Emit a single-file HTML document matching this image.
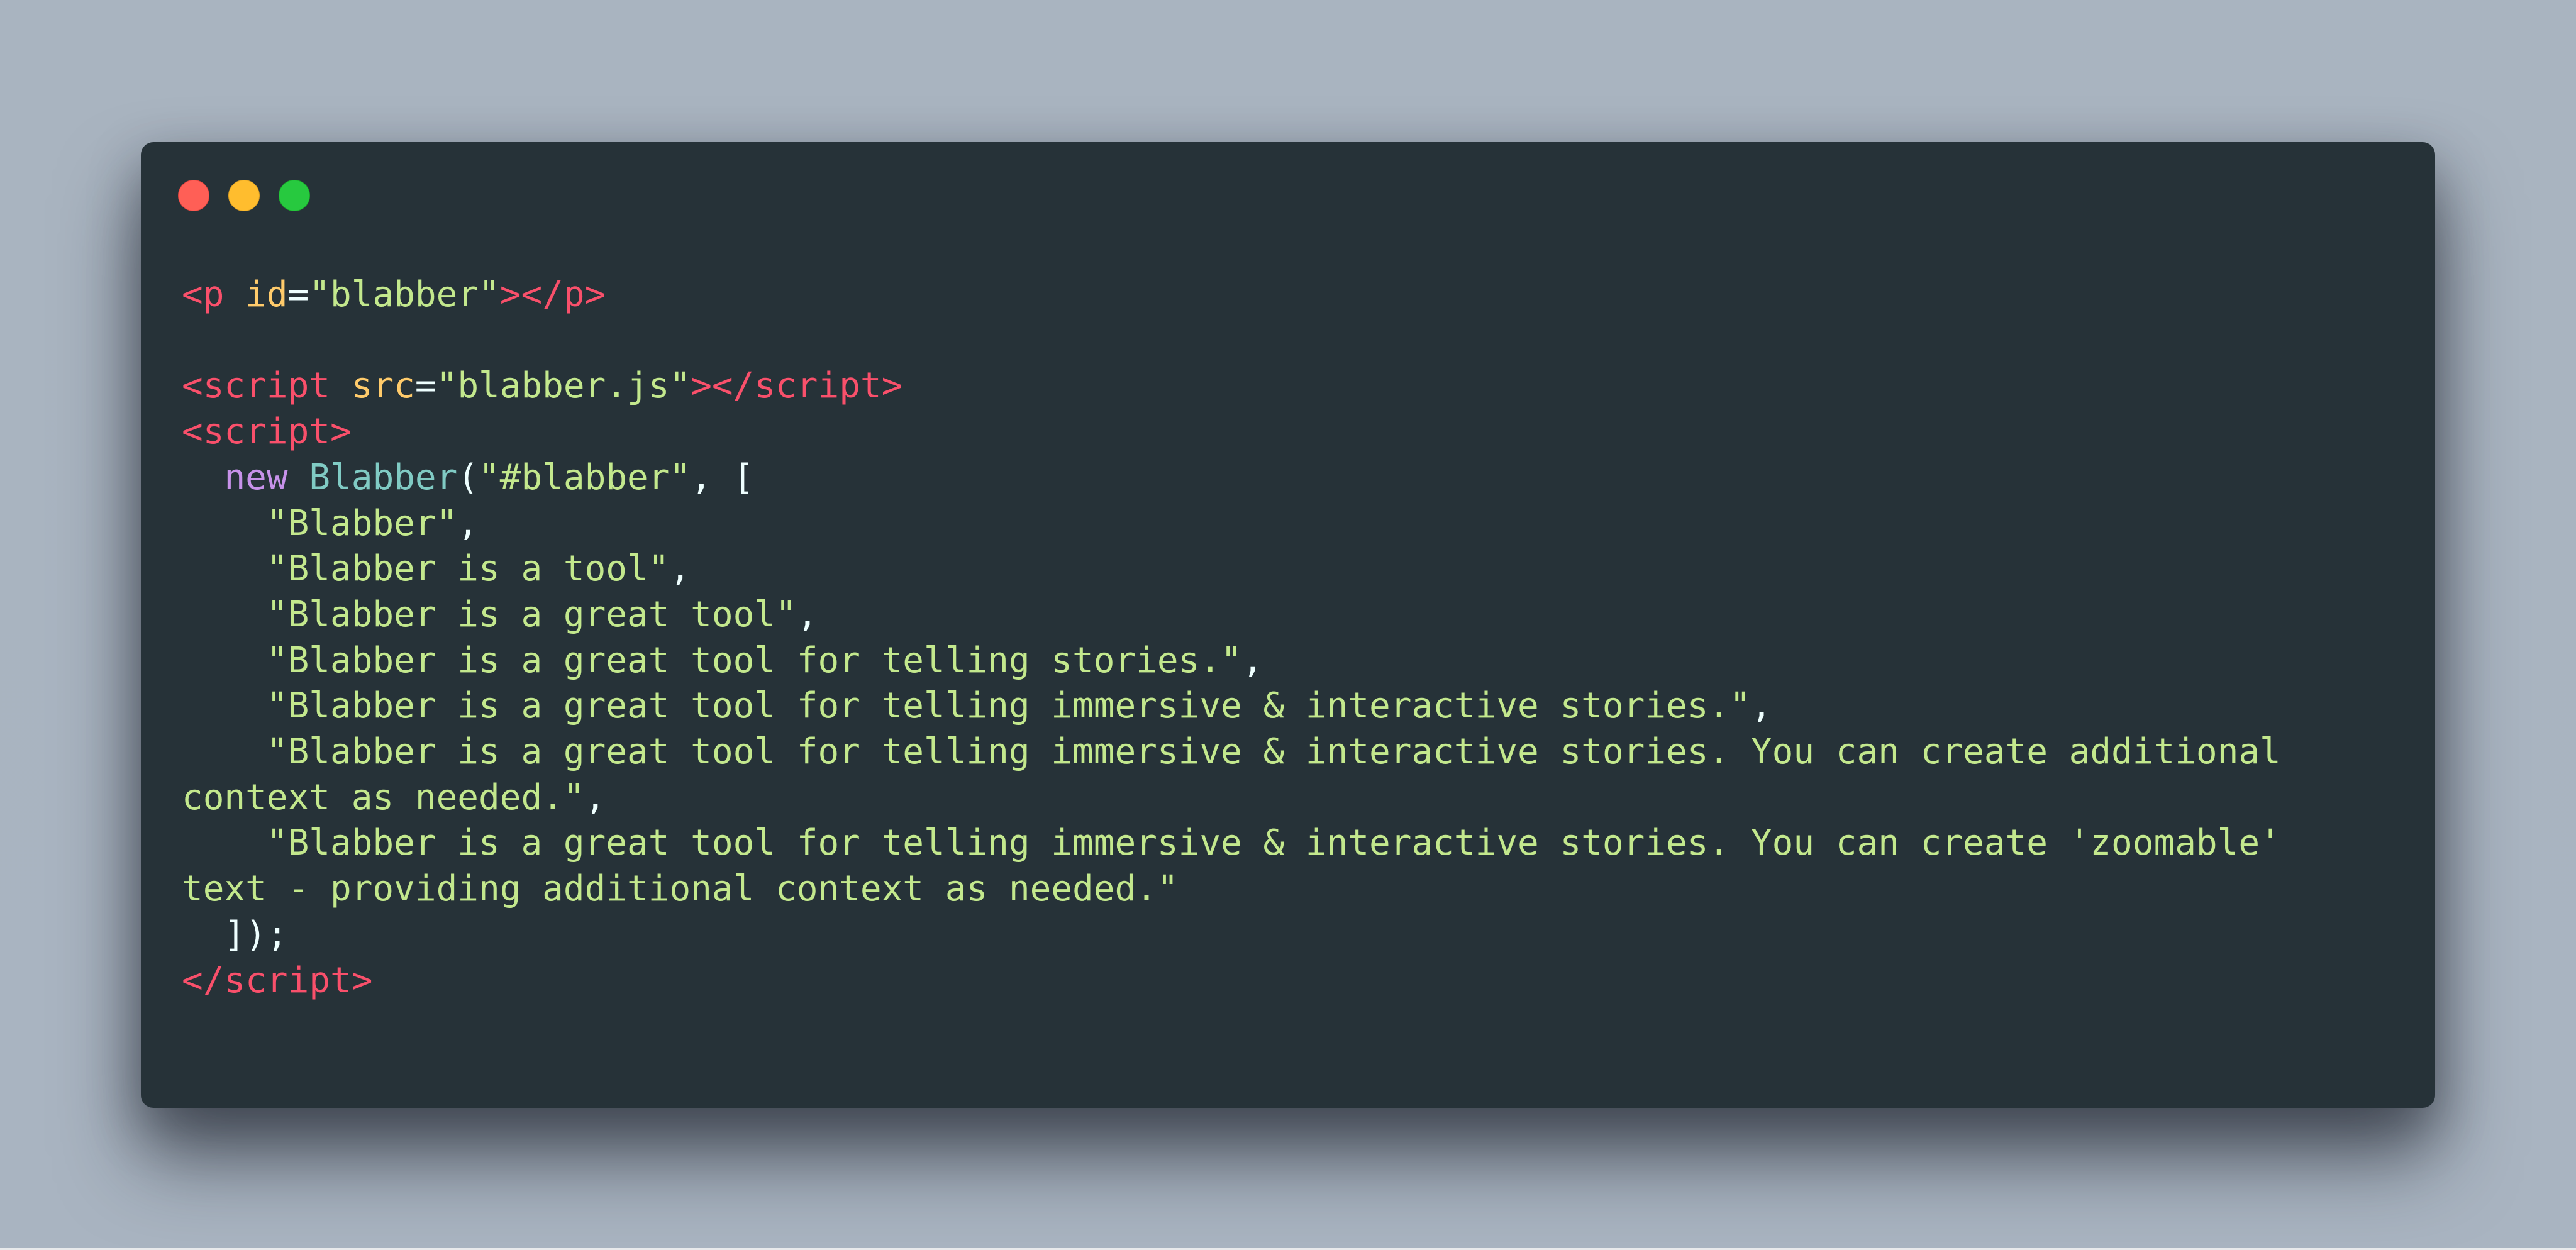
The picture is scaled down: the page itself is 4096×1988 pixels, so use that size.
<!DOCTYPE html>
<html><head><meta charset="utf-8"><style>
html,body{margin:0;padding:0}
body{width:4096px;height:1988px;overflow:hidden;background:linear-gradient(180deg,#a9b4c0 0%,#a9b4c1 100%);position:relative}
.win{position:absolute;left:224px;top:226px;width:3648px;height:1536px;background:#263238;border-radius:20px;box-shadow:0 80px 180px rgba(25,30,40,.6),0 30px 80px rgba(25,30,40,.35)}
.dot{position:absolute;top:60px;width:50px;height:50px;border-radius:50%}
pre{position:absolute;left:65px;top:207px;margin:0;font-family:"DejaVu Sans Mono","Liberation Mono",monospace;font-size:56px;line-height:72.7px;color:#eeffff}
.t{color:#f9506b}.a{color:#ffcb6b}.s{color:#c3e88d}.k{color:#c792ea}.c{color:#80cbc4}
.strip{position:absolute;left:0;bottom:0;width:4096px;height:3px;background:#e8eaec}
</style></head><body>
<div class="win">
<div class="dot" style="left:59px;background:#ff5f56;border:1px solid #e0443e;box-sizing:border-box"></div>
<div class="dot" style="left:139px;background:#ffbd2e;border:1px solid #dea123;box-sizing:border-box"></div>
<div class="dot" style="left:219px;background:#27c93f;border:1px solid #1aab29;box-sizing:border-box"></div>
<pre><span class="t">&lt;p</span> <span class="a">id</span>=<span class="s">"blabber"</span><span class="t">&gt;&lt;/p&gt;</span>

<span class="t">&lt;script</span> <span class="a">src</span>=<span class="s">"blabber.js"</span><span class="t">&gt;&lt;/script&gt;</span>
<span class="t">&lt;script&gt;</span>
  <span class="k">new</span> <span class="c">Blabber</span>(<span class="s">"#blabber"</span>, [
    <span class="s">"Blabber"</span>,
    <span class="s">"Blabber is a tool"</span>,
    <span class="s">"Blabber is a great tool"</span>,
    <span class="s">"Blabber is a great tool for telling stories."</span>,
    <span class="s">"Blabber is a great tool for telling immersive &amp; interactive stories."</span>,
    <span class="s">"Blabber is a great tool for telling immersive &amp; interactive stories. You can create additional
context as needed."</span>,
    <span class="s">"Blabber is a great tool for telling immersive &amp; interactive stories. You can create 'zoomable'
text - providing additional context as needed."</span>
  ]);
<span class="t">&lt;/script&gt;</span></pre>
</div>
<div class="strip"></div>
</body></html>
